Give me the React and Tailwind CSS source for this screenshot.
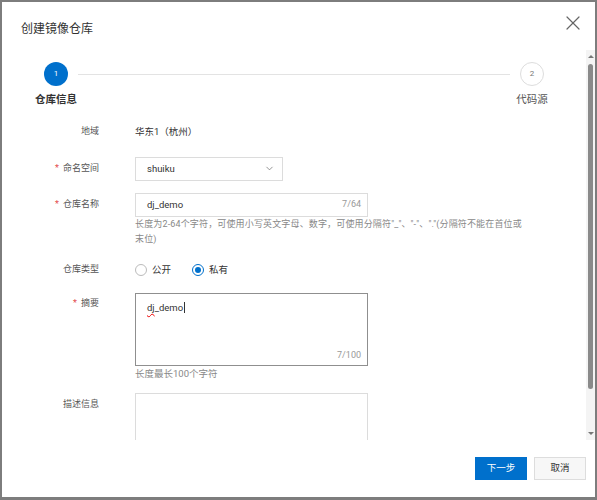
import { X, ChevronDown } from 'lucide-react'

const font = { fontFamily: 'Roboto, "Noto Sans CJK SC", sans-serif' }

function Label({ children, required, className = '' }) {
  return (
    <div className={`w-[98px] shrink-0 pr-[1px] text-right text-[9px] text-[#555] ${className}`}>
      {required ? <span className="mr-[4px] text-[#e34d4d]">*</span> : null}
      {children}
    </div>
  )
}

function Radio({ checked, label }) {
  return (
    <label className="flex items-center gap-[5px]">
      <span
        className={`flex h-[12px] w-[12px] items-center justify-center rounded-full border bg-white ${
          checked ? 'border-[#0070cc]' : 'border-[#bbb]'
        }`}
      >
        {checked ? <span className="h-[6px] w-[6px] rounded-full bg-[#0070cc]" /> : null}
      </span>
      <span className="text-[9.5px] text-[#333]">{label}</span>
    </label>
  )
}

function Steps() {
  return (
    <div className="px-[42px] pt-[12px]">
      <div className="flex items-center">
        <div className="flex w-[24px] flex-col items-center">
          <div className="flex h-[24px] w-[24px] items-center justify-center rounded-full bg-[#0070cc] text-[8px] text-white">
            1
          </div>
        </div>
        <div className="mx-[10px] h-px flex-1 bg-[#e3e3e3]" />
        <div className="flex w-[24px] flex-col items-center">
          <div className="flex h-[24px] w-[24px] items-center justify-center rounded-full border border-[#ddd] bg-white text-[8px] text-[#777]">
            2
          </div>
        </div>
      </div>
      <div className="mt-[6px] flex justify-between">
        <div className="flex w-[24px] justify-center">
          <span className="whitespace-nowrap text-[10.5px] font-bold text-[#333]">仓库信息</span>
        </div>
        <div className="flex w-[24px] justify-center">
          <span className="whitespace-nowrap text-[10.5px] text-[#555]">代码源</span>
        </div>
      </div>
    </div>
  )
}

function Scrollbar() {
  return (
    <div className="flex w-[9px] shrink-0 flex-col items-center bg-[#f4f4f4] pt-[2px] pb-[5px]">
      <div className="mt-[3px] h-0 w-0 border-x-[3px] border-b-[3px] border-x-transparent border-b-[#777]" />
      <div className="mt-[6px] h-[325px] w-[5px] rounded-[3px] bg-[#8a8a8a]" />
      <div className="flex-1" />
      <div className="h-0 w-0 border-x-[3px] border-t-[3px] border-x-transparent border-t-[#777]" />
    </div>
  )
}

export default function App() {
  return (
    <div className="h-[500px] w-[597px] bg-[#7d7d7d] pt-[2px] pr-[2px] pb-[3px] pl-[2px]" style={font}>
      <div className="flex h-full flex-col bg-white">
        <div className="flex h-[48px] shrink-0 items-start justify-between pl-[19px] pr-[10px]">
          <h2 className="mt-[19px] text-[12px] leading-[16px] text-[#333]">创建镜像仓库</h2>
          <X className="mt-[9px] h-[24px] w-[24px] text-[#666]" strokeWidth={1.2} />
        </div>

        <div className="flex h-[395px] shrink-0 pb-[5px]">
          <div className="flex-1 overflow-hidden">
            <Steps />

            <div className="mt-[12px] flex flex-col">
              <div className="flex h-[24px] items-center gap-[35px]">
                <Label>地域</Label>
                <span className="text-[9.5px] text-[#333]">华东1（杭州）</span>
              </div>

              <div className="mt-[13px] flex h-[24px] items-center gap-[35px]">
                <Label required>命名空间</Label>
                <div className="flex h-[24px] w-[148px] items-center justify-between border border-[#dcdcdc] pl-[11px] pr-[7px]">
                  <span className="text-[9.5px] text-[#333]">shuiku</span>
                  <ChevronDown className="h-[11px] w-[11px] text-[#666]" strokeWidth={1.5} />
                </div>
              </div>

              <div className="mt-[12px] flex items-start gap-[35px]">
                <Label required className="pt-[5px]">仓库名称</Label>
                <div className="flex flex-col">
                  <div className="flex h-[24px] w-[233px] items-center justify-between border border-[#dcdcdc] pl-[11px] pr-[6px]">
                    <span className="text-[9.5px] text-[#333]">dj_demo</span>
                    <span className="text-[9px] text-[#999]">7/64</span>
                  </div>
                  <p className="w-[388px] text-[9px] leading-[15px] tracking-[0.15px] text-[#888]">
                    长度为2-64个字符，可使用小写英文字母、数字，可使用分隔符"_"、"-"、"."(分隔符不能在首位或末位)
                  </p>
                </div>
              </div>

              <div className="mt-[11px] flex h-[24px] items-center gap-[35px]">
                <Label>仓库类型</Label>
                <div className="flex items-center gap-[21px]">
                  <Radio label="公开" />
                  <Radio checked label="私有" />
                </div>
              </div>

              <div className="mt-[11px] flex items-start gap-[35px]">
                <Label required className="pt-[4px]">摘要</Label>
                <div className="flex flex-col">
                  <div className="flex h-[73px] w-[233px] flex-col border border-[#8f8f8f] pl-[11px] pr-[6px]">
                    <div className="flex items-center pt-[7px] text-[9.5px] leading-[14px] text-[#333]">
                      <span className="underline decoration-[#e00] decoration-wavy decoration-[1px] underline-offset-[2px]">dj</span>
                      <span>_demo</span>
                      <span className="ml-px h-[11px] w-px bg-[#333]" />
                    </div>
                    <div className="flex-1" />
                    <div className="pb-[2px] text-right text-[9px] text-[#999]">7/100</div>
                  </div>
                  <p className="text-[9.5px] leading-[16px] text-[#888]">长度最长100个字符</p>
                </div>
              </div>

              <div className="mt-[11px] flex items-start gap-[35px]">
                <Label className="pt-[5px]">描述信息</Label>
                <div className="h-[80px] w-[233px] border border-[#dcdcdc]" />
              </div>
            </div>
          </div>
          <Scrollbar />
        </div>

        <div className="flex flex-1 items-start justify-end gap-[7px] pt-[12px] pr-[9px]">
          <button className="h-[23px] w-[52px] bg-[#0070cc] text-[9.5px] text-white">下一步</button>
          <button className="h-[23px] w-[52px] border border-[#ddd] bg-[#f7f7f7] text-[9.5px] text-[#333]">
            取消
          </button>
        </div>
      </div>
    </div>
  )
}
